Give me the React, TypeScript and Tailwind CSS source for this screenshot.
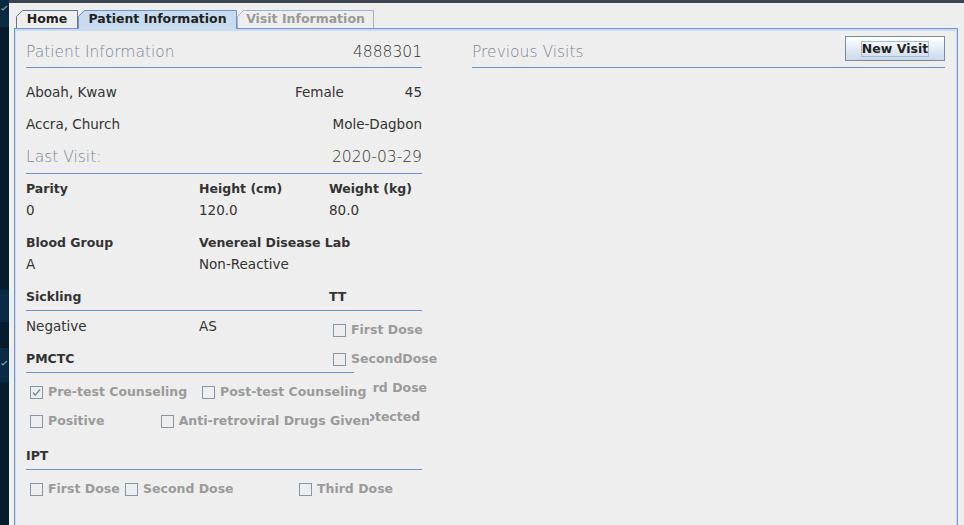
import React from "react";

function Tab({
  w,
  label,
  fill,
  stroke,
  textClass,
  className,
  h,
}: {
  w: number;
  h: number;
  label: string;
  fill: string;
  stroke: string;
  textClass: string;
  className: string;
}) {
  return (
    <div className={"relative flex items-center justify-center " + className}>
      <svg className="absolute inset-0" width={w} height={h} viewBox={`0 0 ${w} ${h}`}>
        <path d={`M0 ${h} V6 L6 0 H${w} V${h} Z`} fill={fill} />
        <path d={`M0.5 ${h} V6.5 L6.5 0.5 H${w - 0.5} V${h}`} fill="none" stroke={stroke} strokeWidth="1" />
      </svg>
      <span className={"relative text-[12.5px] font-bold leading-[16px] " + textClass}>{label}</span>
    </div>
  );
}

function Cb({ label, checked, className }: { label: string; checked?: boolean; className?: string }) {
  return (
    <div className={"flex items-center h-[22px] pt-[2px] " + (className || "")}>
      <span className="w-[13px] h-[13px] border border-[#8696a7] flex items-center justify-center shrink-0">
        {checked && (
          <svg width="9" height="9" viewBox="0 0 9 9">
            <path d="M1 4.5 L3.2 7.2 L8 1.5" stroke="#7a8a9b" strokeWidth="1.4" fill="none" />
          </svg>
        )}
      </span>
      <span className="ml-[5px] text-[12.5px] font-bold text-[#9a9a9a] whitespace-nowrap leading-[16px]">{label}</span>
    </div>
  );
}

function StripCheck() {
  return (
    <svg width="7" height="6" viewBox="0 0 7 6" className="ml-[1px]">
      <path d="M0.5 3.5 L2 5 L6 1" stroke="#8a98a6" strokeWidth="1.2" fill="none" />
    </svg>
  );
}

export default function App() {
  return (
    <div className="w-[964px] h-[525px] overflow-hidden flex bg-[#eeeeee] font-['DejaVu_Sans',sans-serif] text-[#333333]">
      {/* left dark strip */}
      <div className="w-[9px] h-full flex flex-col shrink-0">
        <div className="h-[27px] bg-[#0a2a40] pt-[5px]">
          <StripCheck />
        </div>
        <div className="h-[263px] bg-[#051c2c]" />
        <div className="h-[32px] bg-[#082b43]" />
        <div className="h-[25px] bg-[#051c2c]" />
        <div className="h-[1px] bg-[#02101a]" />
        <div className="h-[34px] bg-[#082b43] pt-[12px]">
          <StripCheck />
        </div>
        <div className="flex-1 bg-[#051c2c]" />
      </div>

      <div className="flex-1 flex flex-col">
        <div className="h-[3px] bg-[#3a4550] shrink-0" />
        {/* tabs */}
        <div className="flex items-start pt-[7px] pl-[7px] h-[25px] shrink-0">
          <Tab w={62} h={18} className="w-[62px] h-[18px]" label="Home" fill="#eeeeee" stroke="#66768a" textClass="text-[#222222]" />
          <Tab
            w={159}
            h={19}
            className="w-[159px] h-[19px] z-10"
            label="Patient Information"
            fill="#c8dcf0"
            stroke="#7393c8"
            textClass="text-[#222222] -mt-[1px]"
          />
          <Tab w={137} h={18} className="w-[137px] h-[18px]" label="Visit Information" fill="#eeeeee" stroke="#a3b1c0" textClass="text-[#999999]" />
        </div>

        {/* tab panel */}
        <div className="ml-[5px] w-[944px] h-[520px] shrink-0 border border-[#7494cc]">
          <div className="h-full border border-t-2 border-[#c8dcf0] flex pl-[10px] pr-[11px]">
            {/* left column */}
            <div className="w-[396px] flex flex-col shrink-0">
              <div className="h-[37px] pt-[11px] border-b border-[#6f8dc9] flex justify-between">
                <span className="h-[20px] leading-[20px] text-[15.5px] font-extralight text-[#7b8897]">Patient Information</span>
                <span className="h-[20px] leading-[20px] text-[15.5px] font-extralight text-[#333333]">4888301</span>
              </div>

              <div className="mt-[8px] h-[32px] flex items-center text-[13.5px]">
                <span className="w-[269px]">Aboah, Kwaw</span>
                <span>Female</span>
                <span className="ml-auto">45</span>
              </div>
              <div className="h-[32px] flex items-center justify-between text-[13.5px]">
                <span>Accra, Church</span>
                <span>Mole-Dagbon</span>
              </div>
              <div className="h-[34px] pt-[3px] border-b border-[#6f8dc9] flex items-center justify-between">
                <span className="text-[15.5px] font-extralight text-[#7b8897]">Last Visit:</span>
                <span className="text-[15.5px] font-extralight text-[#333333]">2020-03-29</span>
              </div>

              <div className="mt-[3px] h-[22px] pt-[2px] grid grid-cols-[173px_130px_1fr] items-center text-[12.5px] font-bold">
                <span>Parity</span>
                <span>Height (cm)</span>
                <span>Weight (kg)</span>
              </div>
              <div className="h-[22px] grid grid-cols-[173px_130px_1fr] items-center text-[13.5px]">
                <span>0</span>
                <span>120.0</span>
                <span>80.0</span>
              </div>
              <div className="mt-[10px] h-[22px] pt-[2px] grid grid-cols-[173px_130px_1fr] items-center text-[12.5px] font-bold">
                <span>Blood Group</span>
                <span className="whitespace-nowrap">Venereal Disease Lab</span>
                <span />
              </div>
              <div className="h-[22px] grid grid-cols-[173px_130px_1fr] items-center text-[13.5px]">
                <span>A</span>
                <span>Non-Reactive</span>
                <span />
              </div>
              <div className="mt-[10px] h-[26px] border-b border-[#6f8dc9]">
                <div className="h-[22px] pt-[2px] grid grid-cols-[173px_130px_1fr] items-center text-[12.5px] font-bold">
                  <span>Sickling</span>
                  <span />
                  <span>TT</span>
                </div>
              </div>

              <div className="relative mt-[4px]">
                {/* TT checkbox column (partly hidden behind PMCTC checkboxes) */}
                <div className="absolute top-[3px] left-[307px] flex flex-col gap-[7px]">
                  <Cb label="First Dose" />
                  <Cb label="SecondDose" />
                  <Cb label="Third Dose" />
                  <Cb label="Protected" />
                </div>

                <div className="h-[22px] grid grid-cols-[173px_130px_1fr] items-center text-[13.5px]">
                  <span>Negative</span>
                  <span>AS</span>
                  <span />
                </div>

                <div className="mt-[10px] h-[26px] w-[328px] border-b border-[#6f8dc9]">
                  <div className="h-[22px] pt-[2px] flex items-center text-[12.5px] font-bold">PMCTC</div>
                </div>

                <div className="relative z-10 mt-[7px] flex flex-col gap-[7px]">
                  <div className="flex w-[346px] bg-[#eeeeee] pl-[4px]">
                    <Cb label="Pre-test Counseling" checked className="w-[172px]" />
                    <Cb label="Post-test Counseling" />
                  </div>
                  <div className="flex w-[344px] bg-[#eeeeee] pl-[4px]">
                    <Cb label="Positive" className="w-[133px]" />
                    <Cb label="Anti-retroviral Drugs Given" />
                  </div>
                </div>

                <div className="mt-[13px] h-[26px] border-b border-[#6f8dc9]">
                  <div className="h-[22px] pt-[2px] flex items-center text-[12.5px] font-bold">IPT</div>
                </div>

                <div className="mt-[7px] flex pl-[4px]">
                  <Cb label="First Dose" className="w-[95px]" />
                  <Cb label="Second Dose" className="w-[174px]" />
                  <Cb label="Third Dose" />
                </div>
              </div>
            </div>

            {/* right column */}
            <div className="flex-1 ml-[50px]">
              <div className="h-[37px] border-b border-[#6f8dc9] flex justify-between items-start">
                <span className="mt-[11px] h-[20px] leading-[20px] text-[15.5px] font-extralight text-[#7b8897]">Previous Visits</span>
                <button className="mt-[5px] w-[100px] h-[25px] border border-[#7a8a9b] bg-gradient-to-b from-[#ffffff] to-[#c9d9ea] flex items-center justify-center">
                  <span className="border border-[#a6bcd2] text-[12.5px] font-bold text-[#222222] leading-[14px] px-[0px] mt-[1px]">New Visit</span>
                </button>
              </div>
            </div>
          </div>
        </div>
      </div>
    </div>
  );
}
